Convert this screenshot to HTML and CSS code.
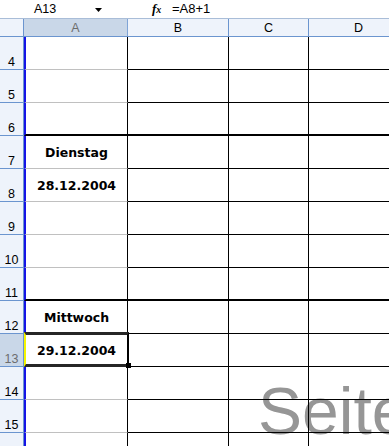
FILE: index.html
```html
<!DOCTYPE html>
<html>
<head>
<meta charset="utf-8">
<link rel="stylesheet" href="styles.css">
</head>
<body>
<div class="fbar">
  <div class="namebox">A13</div>
  <div class="dd"><svg width="7" height="4" viewBox="0 0 7 4"><path d="M0 0H7L3.5 4Z" fill="#000"/></svg></div>
  <div class="fxbox"><span class="fx">f<span class="fxx">x</span></span></div>
  <div class="formula">=A8+1</div>
</div>
<div class="watermark">Seite</div>
<div class="sheet">
  <div class="hdr">
    <div class="corner"></div>
    <div class="ch wa selh">A</div>
    <div class="ch wb">B</div>
    <div class="ch wc">C</div>
    <div class="ch wd">D</div>
  </div>
  <div class="row"><div class="rh">4</div><div class="c wa a"></div><div class="c wb"></div><div class="c wc"></div><div class="c wd"></div></div>
  <div class="row"><div class="rh">5</div><div class="c wa a"></div><div class="c wb"></div><div class="c wc"></div><div class="c wd"></div></div>
  <div class="row thick"><div class="rh">6</div><div class="c wa a"></div><div class="c wb"></div><div class="c wc"></div><div class="c wd"></div></div>
  <div class="row"><div class="rh">7</div><div class="c wa a"><span class="t">Dienstag</span></div><div class="c wb"></div><div class="c wc"></div><div class="c wd"></div></div>
  <div class="row"><div class="rh">8</div><div class="c wa a"><span class="t">28.12.2004</span></div><div class="c wb"></div><div class="c wc"></div><div class="c wd"></div></div>
  <div class="row"><div class="rh">9</div><div class="c wa a"></div><div class="c wb"></div><div class="c wc"></div><div class="c wd"></div></div>
  <div class="row"><div class="rh">10</div><div class="c wa a"></div><div class="c wb"></div><div class="c wc"></div><div class="c wd"></div></div>
  <div class="row thick"><div class="rh">11</div><div class="c wa a"></div><div class="c wb"></div><div class="c wc"></div><div class="c wd"></div></div>
  <div class="row"><div class="rh">12</div><div class="c wa a"><span class="t">Mittwoch</span></div><div class="c wb"></div><div class="c wc"></div><div class="c wd"></div></div>
  <div class="row"><div class="rh selr">13</div><div class="c wa a active"><span class="t">29.12.2004</span><div class="sel"><div class="handle"></div></div></div><div class="c wb"></div><div class="c wc"></div><div class="c wd"></div></div>
  <div class="row"><div class="rh">14</div><div class="c wa a"></div><div class="c wb"></div><div class="c wc"></div><div class="c wd"></div></div>
  <div class="row"><div class="rh">15</div><div class="c wa a"></div><div class="c wb"></div><div class="c wc"></div><div class="c wd"></div></div>
  <div class="row"><div class="rh"></div><div class="c wa a"></div><div class="c wb"></div><div class="c wc"></div><div class="c wd"></div></div>
</div>
</body>
</html>
```
FILE: styles.css
```css
html, body {
  margin: 0;
  padding: 0;
  background: #fff;
}
body {
  width: 389px;
  height: 446px;
  overflow: hidden;
  position: relative;
  font-family: "Liberation Sans", Arial, sans-serif;
}
.fbar {
  display: flex;
  height: 19px;
  box-sizing: border-box;
  border-bottom: 1px solid #a9bdd8;
  background: #fff;
  font-size: 13px;
  line-height: 18px;
  color: #000;
}
.namebox {
  width: 90px;
  text-align: center;
  font-size: 12.5px;
}
.dd {
  width: 16px;
  display: flex;
  align-items: center;
  justify-content: center;
  padding-top: 2px;
  box-sizing: border-box;
}
.fxbox {
  width: 62px;
  padding-left: 46px;
  box-sizing: border-box;
}
.fx {
  font-family: "Liberation Serif", "Times New Roman", serif;
  font-style: italic;
  font-weight: bold;
  font-size: 13px;
}
.fxx {
  font-size: 10px;
}
.formula {
  padding-left: 4px;
  flex: 1;
}
.watermark {
  position: absolute;
  left: 258px;
  top: 378px;
  font-size: 66px;
  line-height: 66px;
  color: #969696;
  white-space: nowrap;
}
.sheet {
  position: relative;
  width: 409px;
}
.hdr, .row {
  display: flex;
}
.hdr {
  height: 18px;
  box-sizing: border-box;
  border-bottom: 1px solid #6b95cf;
  background: #eef3fb;
}
.corner {
  width: 24px;
  flex: none;
  box-sizing: border-box;
  border-right: 1px solid #6b95cf;
}
.ch {
  box-sizing: border-box;
  border-right: 1px solid #6b95cf;
  text-align: center;
  font-size: 12.5px;
  line-height: 17px;
  padding-top: 1px;
  color: #000;
  flex: none;
}
.selh {
  background: #c9d7e8;
  color: #6d6d6d;
  border-right-color: #7fa4d6;
}
.wa { width: 104px; }
.wb { width: 101px; }
.wc { width: 80px; }
.wd { width: 100px; }
.row {
  height: 33px;
}
.rh {
  width: 24px;
  flex: none;
  box-sizing: border-box;
  background: #eef3fb;
  border-right: 1px solid #6b95cf;
  border-bottom: 1px solid #6b95cf;
  display: flex;
  align-items: flex-end;
  justify-content: center;
  font-size: 12.5px;
  line-height: 14px;
  color: #000;
}
.rh.selr {
  background: #c9d7e8;
  color: #6d6d6d;
}
.c {
  flex: none;
  box-sizing: border-box;
  border-right: 1px solid #000;
  border-bottom: 1px solid #000;
  display: flex;
  align-items: center;
  justify-content: center;
}
.c.a {
  border-left: 2px solid #1414e6;
  border-bottom-color: #c0c0c0;
  position: relative;
}
.row.thick .c {
  border-bottom: 2px solid #000;
}
.t {
  font-family: "DejaVu Sans", Verdana, sans-serif;
  font-weight: bold;
  font-size: 12.5px;
  color: #000;
  white-space: nowrap;
}
.sel {
  position: absolute;
  left: -2px;
  right: -2px;
  top: -2px;
  bottom: -1px;
  border-top: 3px solid #262626;
  border-bottom: 3px solid #262626;
  border-left: 2px solid #f4f400;
  border-right: 2px solid #000;
}
.handle {
  position: absolute;
  right: -4px;
  bottom: -4px;
  width: 5px;
  height: 5px;
  background: #000;
}
```
